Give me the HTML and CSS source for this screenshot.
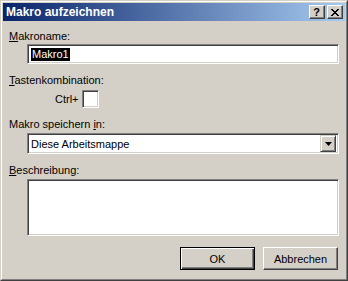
FILE: index.html
```html
<!DOCTYPE html>
<html lang="de">
<head>
  <meta charset="UTF-8" />
  <title>Makro aufzeichnen</title>
  <link rel="stylesheet" href="styles.css">
</head>
<body>

  <!-- Dialogfenster -->
  <div class="window">
    <div class="frame">

      <!-- Titelleiste -->
      <div class="titlebar">
        <span class="title">Makro aufzeichnen</span>
        <div class="caption-buttons">
          <span class="cap-btn help">?</span>
          <span class="cap-btn">
            <svg width="8" height="7" viewBox="0 0 8 7">
              <path d="M0 0h2v1h1v1h2v-1h1v-1h2v1h-1v1h-1v1h-1v1h1v1h1v1h1v1h-2v-1h-1v-1h-2v1h-1v1h-2v-1h1v-1h1v-1h1v-1h-1v-1h-1v-1h-1z" fill="#000"/>
            </svg>
          </span>
        </div>
      </div>

      <!-- Inhalt -->
      <div class="content">
        <div class="label label-first"><u>M</u>akroname:</div>
        <div class="field edit"><span class="selected">Makro1</span></div>

        <div class="label"><u>T</u>astenkombination:</div>
        <div class="shortcut">
          <span class="ctrl">Ctrl+</span>
          <div class="field key"></div>
        </div>

        <div class="label">Makro speichern <u>i</u>n:</div>
        <div class="field combo">
          <span class="combo-text">Diese Arbeitsmappe</span>
          <span class="combo-btn">
            <svg width="7" height="4" viewBox="0 0 7 4">
              <path d="M0 0h7l-3.5 4z" fill="#000"/>
            </svg>
          </span>
        </div>

        <div class="label"><u>B</u>eschreibung:</div>
        <div class="field memo"></div>

        <div class="actions">
          <button class="btn default">OK</button>
          <button class="btn">Abbrechen</button>
        </div>
      </div>

    </div>
  </div>

</body>
</html>
```

FILE: styles.css
```css
/* Reset */
* {
  margin: 0;
  padding: 0;
  box-sizing: border-box;
}

body {
  font-family: "Liberation Sans", Arial, sans-serif;
  font-size: 11px;
  color: #000;
  background-color: #d4d0c8;
}

/* Fensterrahmen */
.window {
  width: 348px;
  height: 281px;
  border: 1px solid;
  border-color: #d4d0c8 #404040 #404040 #d4d0c8;
}

.frame {
  height: 100%;
  border: 1px solid;
  border-color: #fff #808080 #808080 #fff;
  padding: 1px;
  background-color: #d4d0c8;
}

/* Titelleiste */
.titlebar {
  display: flex;
  align-items: center;
  justify-content: space-between;
  height: 18px;
  padding: 0 2px 0 3px;
  background: linear-gradient(to right, #0a246a, #a6caf0);
}

.title {
  color: #fff;
  font-weight: bold;
  font-size: 12px;
}

.caption-buttons {
  display: flex;
  gap: 2px;
}

.cap-btn {
  display: flex;
  align-items: center;
  justify-content: center;
  width: 16px;
  height: 14px;
  background-color: #d4d0c8;
  border: 1px solid;
  border-color: #fff #404040 #404040 #fff;
  box-shadow: inset -1px -1px #808080;
}

.cap-btn.help {
  font-weight: bold;
  font-size: 11px;
  line-height: 12px;
  padding-right: 1px;
}

/* Inhalt */
.content {
  display: flex;
  flex-direction: column;
  padding: 0 6px;
}

.label {
  line-height: 13px;
  margin-top: 10px;
}

.label-first {
  margin-top: 9px;
}

.field {
  background-color: #fff;
  border: 1px solid;
  border-color: #808080 #fff #fff #808080;
  box-shadow: inset 1px 1px #404040, inset -1px -1px #d4d0c8;
}

.edit {
  display: flex;
  align-items: center;
  height: 20px;
  margin: 1px 0 0 18px;
  padding-left: 3px;
}

.selected {
  background-color: #000;
  color: #fff;
  line-height: 13px;
  padding: 0 1px;
}

.shortcut {
  display: flex;
  align-items: center;
  margin-top: 3px;
  padding-left: 46px;
}

.ctrl {
  margin-right: 3px;
}

.key {
  width: 17px;
  height: 18px;
}

.combo {
  display: flex;
  align-items: center;
  justify-content: space-between;
  height: 21px;
  margin: 2px 0 0 18px;
  padding: 2px 2px 2px 3px;
}

.combo-btn {
  display: flex;
  align-items: center;
  justify-content: center;
  width: 16px;
  height: 17px;
  background-color: #d4d0c8;
  border: 1px solid;
  border-color: #d4d0c8 #404040 #404040 #d4d0c8;
  box-shadow: inset 1px 1px #fff, inset -1px -1px #808080;
}

.memo {
  height: 57px;
  margin: 2px 0 0 18px;
}

/* Schaltflächen */
.actions {
  display: flex;
  justify-content: flex-end;
  gap: 8px;
  margin-top: 11px;
  padding-right: 1px;
}

.btn {
  width: 75px;
  height: 23px;
  font-family: inherit;
  font-size: 11px;
  color: #000;
  background-color: #d4d0c8;
  border: 1px solid;
  border-color: #fff #404040 #404040 #fff;
  box-shadow: inset -1px -1px #808080;
}

.btn.default {
  border-color: #000;
  box-shadow: inset 1px 1px #fff, inset -1px -1px #404040, inset -2px -2px #808080;
}
```
